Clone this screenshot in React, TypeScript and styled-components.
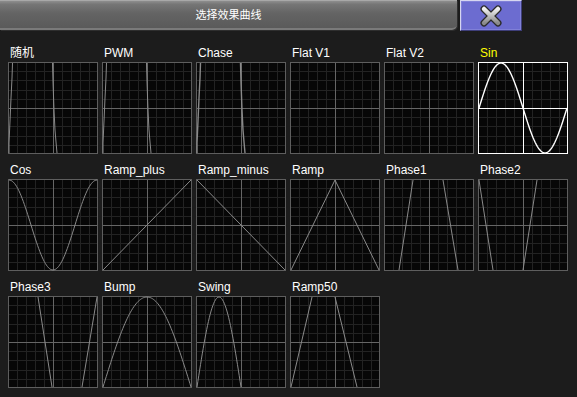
import React from "react"
import styled, { createGlobalStyle } from "styled-components"

const GlobalStyle = createGlobalStyle`
    html, body {
        margin: 0;
        padding: 0;
        background: #1c1c1c;
    }
    body {
        width: 577px;
        height: 397px;
        overflow: hidden;
        font-family: "Liberation Sans", "Noto Sans CJK SC", sans-serif;
    }
`

const W = 90
const H = 92

type Pt = [number, number]

interface Curve {
    name: string;
    paths: Pt[][];
    width?: number;
}

// u: 0..1 left to right, v: 0..1 bottom to top
const fn = (f: (u: number) => number, from = 0, to = 1, steps = 80): Pt[] => {
    const pts: Pt[] = []
    for (let i = 0; i <= steps; i++) {
        const u = from + (to - from) * i / steps
        pts.push([1 + u * (W - 2), H - 1 - f(u) * (H - 2)])
    }
    return pts
}

const noise: Pt[][] = [
    [[4.5, 1], [4, 16], [3, 36], [2, 59], [1, 81], [1, 91]],
    [[44.5, 1], [45, 20], [46, 48], [47, 68], [48, 80], [49, 91]],
]

const curves: Curve[] = [
    { name: "随机", paths: noise },
    { name: "PWM", paths: noise },
    { name: "Chase", paths: noise, width: 1.4 },
    { name: "Flat V1", paths: [] },
    { name: "Flat V2", paths: [] },
    { name: "Sin", paths: [fn(u => 0.5 + 0.5 * Math.sin(2 * Math.PI * u))], width: 1.4 },
    { name: "Cos", paths: [fn(u => 0.5 + 0.5 * Math.cos(2 * Math.PI * u))] },
    { name: "Ramp_plus", paths: [[[1, 91], [89, 1]]] },
    { name: "Ramp_minus", paths: [[[1, 1], [89, 91]]] },
    { name: "Ramp", paths: [[[1, 91], [45, 1], [89, 91]]] },
    { name: "Phase1", paths: [[[15, 91], [29, 1]], [[59, 1], [74, 91]]] },
    { name: "Phase2", paths: [[[1, 1], [15, 91]], [[45, 91], [59, 1]]] },
    { name: "Phase3", paths: [[[30, 1], [44, 91]], [[74, 91], [89, 1]]] },
    { name: "Bump", paths: [fn(u => Math.sin(Math.PI * u))] },
    { name: "Swing", paths: [fn(u => Math.sin(2 * Math.PI * u), 0, 0.5, 50)] },
    { name: "Ramp50", paths: [[[1, 91], [22, 1]], [[45, 1], [67, 91]]] },
]

const Page = styled.div`
    width: 577px;
    height: 397px;
    background: #1c1c1c;
`

const Header = styled.div`
    display: flex;
    flex-direction: row;
    align-items: flex-start;
    gap: 3px;
    height: 33px;
`

const TitleBar = styled.div`
    flex: 0 0 457px;
    height: 30px;
    box-sizing: border-box;
    display: flex;
    align-items: center;
    justify-content: center;

    background: linear-gradient(#8e8e8e 0%, #767676 12%, #646464 45%, #5a5a5a 100%);
    border-top: 1px solid #a8a8a8;
    border-bottom: 2px solid #7a7a7a;
    border-radius: 0 0 5px 0;
    box-shadow: 1px 1px 0 #2e2e2e;

    color: #fff;
    font-family: "Noto Sans CJK SC", sans-serif;
    font-size: 11px;
    padding-bottom: 1px;
`

const CloseButton = styled.div`
    flex: 0 0 62px;
    height: 31px;
    box-sizing: border-box;
    display: flex;
    align-items: center;
    justify-content: center;

    background: #6c6cd0;
    border: 1px solid #3e3e7a;
    border-top-color: #d6d6f0;
    border-left-color: #d6d6f0;
    box-shadow: inset 0 0 0 1px #8080d8;
`

const Grid = styled.div`
    display: grid;
    grid-template-columns: repeat(6, 90px);
    column-gap: 4px;
    row-gap: 8px;
    padding: 12px 0 0 8px;
`

const Tile = styled.div`
    display: flex;
    flex-direction: column;
`

const Label = styled.div<{ $active: boolean }>`
    height: 17px;
    line-height: 17px;
    padding-left: 2px;
    font-size: 12px;
    white-space: nowrap;
    color: ${p => p.$active ? "#ffff00" : "#fff"};
`

const Chart = ({ curve, active }: { curve: Curve; active: boolean }) => {
    const line = active ? "#fff" : "#5e5e5e"
    const center = active ? "#fff" : "#666"
    const stroke = active ? "#fff" : "#8a8a8a"
    const minor: number[] = [1, 2, 3, 4, 6, 7, 8, 9]
    return (
        <svg width={W} height={H} viewBox={`0 0 ${W} ${H}`} style={{ display: "block" }}>
            <rect x={0} y={0} width={W} height={H} fill="#070707" />
            <g shapeRendering="crispEdges" strokeWidth={1}>
                {minor.map(i => (
                    <line key={"v" + i} x1={i * 9 + 0.5} y1={0} x2={i * 9 + 0.5} y2={H} stroke="#232323" />
                ))}
                {minor.map(i => (
                    <line key={"h" + i} x1={0} y1={Math.round(i * 9.2) + 0.5} x2={W} y2={Math.round(i * 9.2) + 0.5} stroke="#232323" />
                ))}
                <line x1={45.5} y1={0} x2={45.5} y2={H} stroke={center} />
                <line x1={0} y1={46.5} x2={W} y2={46.5} stroke={center} />
                <rect x={0.5} y={0.5} width={W - 1} height={H - 1} fill="none" stroke={line} />
            </g>
            {curve.paths.map((p, i) => (
                <polyline
                    key={i}
                    points={p.map(([x, y]) => `${x},${y}`).join(" ")}
                    fill="none"
                    stroke={stroke}
                    strokeWidth={curve.width ?? 1}
                />
            ))}
        </svg>
    )
}

const CloseIcon = () => (
    <svg width="24" height="22" viewBox="0 0 24 22">
        <defs>
            <linearGradient id="xg" x1="0" y1="0" x2="0" y2="1">
                <stop offset="0" stopColor="#f0f0f0" />
                <stop offset="1" stopColor="#8a8a8a" />
            </linearGradient>
        </defs>
        <g strokeLinecap="round">
            <line x1="5" y1="4" x2="19" y2="18" stroke="#2a2a2a" strokeWidth="7" />
            <line x1="19" y1="4" x2="5" y2="18" stroke="#2a2a2a" strokeWidth="7" />
            <line x1="5" y1="4" x2="19" y2="18" stroke="url(#xg)" strokeWidth="4.5" />
            <line x1="19" y1="4" x2="5" y2="18" stroke="url(#xg)" strokeWidth="4.5" />
        </g>
    </svg>
)

export default function App() {
    return (
        <Page>
            <GlobalStyle />
            <Header>
                <TitleBar>选择效果曲线</TitleBar>
                <CloseButton><CloseIcon /></CloseButton>
            </Header>
            <Grid>
                {curves.map(c => {
                    const active = c.name === "Sin"
                    return (
                        <Tile key={c.name}>
                            <Label $active={active}>{c.name}</Label>
                            <Chart curve={c} active={active} />
                        </Tile>
                    )
                })}
            </Grid>
        </Page>
    )
}
